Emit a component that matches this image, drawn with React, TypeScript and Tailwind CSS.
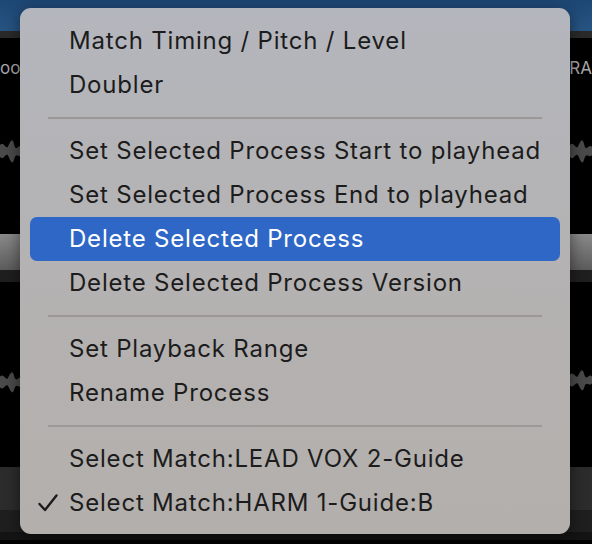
type Item = { label: string; selected?: boolean; checked?: boolean } | "sep";

const items: Item[] = [
  { label: "Match Timing / Pitch / Level" },
  { label: "Doubler" },
  "sep",
  { label: "Set Selected Process Start to playhead" },
  { label: "Set Selected Process End to playhead" },
  { label: "Delete Selected Process", selected: true },
  { label: "Delete Selected Process Version" },
  "sep",
  { label: "Set Playback Range" },
  { label: "Rename Process" },
  "sep",
  { label: "Select Match:LEAD VOX 2-Guide" },
  { label: "Select Match:HARM 1-Guide:B", checked: true },
];

function Wave({ className }: { className?: string }) {
  return (
    <svg viewBox="0 0 40 40" className={className} preserveAspectRatio="none">
      <path
        d="M0 14 C6 10 10 18 14 16 C18 12 22 4 26 14 C30 22 34 12 40 16 L40 24 C34 28 30 20 26 28 C22 36 18 28 14 24 C10 22 6 30 0 26 Z"
        fill="#4a4a4a"
      />
    </svg>
  );
}

function Backdrop() {
  return (
    <div className="flex flex-col h-[544px] w-[592px] bg-black">
      <div className="h-[31px] bg-gradient-to-b from-[#1d4674] to-[#285584]" />
      <div className="h-[7px] bg-[#2a2a2a]" />
      <div className="h-[196px] flex justify-between items-start bg-black">
        <div className="flex flex-col w-[22px]">
          <span className="mt-[19px] text-[17px] leading-[22px] text-[#a8a8a8]">oo</span>
          <Wave className="w-[22px] h-[40px] mt-[52px]" />
        </div>
        <div className="flex flex-col w-[22px] items-end">
          <span className="mt-[19px] text-[17px] leading-[22px] text-[#a8a8a8] whitespace-nowrap">RA</span>
          <Wave className="w-[22px] h-[40px] mt-[52px]" />
        </div>
      </div>
      <div className="h-[36px] bg-gradient-to-b from-[#8a8a8a] to-[#5c5c5c]" />
      <div className="h-[12px] bg-[#1f1f1f]" />
      <div className="h-[185px] flex justify-between bg-black">
        <Wave className="w-[22px] h-[36px] mt-[82px]" />
        <Wave className="w-[22px] h-[36px] mt-[80px]" />
      </div>
      <div className="h-[43px] bg-[#2c2c2c]" />
      <div className="h-[22px] bg-[#1f1f1f]" />
      <div className="h-[8px] bg-[#141414]" />
    </div>
  );
}

export default function App() {
  return (
    <div
      className="relative w-[592px] h-[544px] overflow-hidden"
      style={{ fontFamily: "Inter, 'Noto Sans', sans-serif" }}
    >
      <Backdrop />
      <div className="absolute left-[20px] top-[8px] w-[550px] h-[526px] rounded-[11px] bg-gradient-to-b from-[#b4b6bd] via-[#b4b2b2] to-[#b3afac] shadow-[0_4px_16px_rgba(0,0,0,0.5)] px-[10px] pt-[11px] pb-[9px] flex flex-col">
        {items.map((it, i) =>
          it === "sep" ? (
            <div key={i} className="h-[22px] flex items-center pl-[18px] pr-[18px]">
              <div className="h-[2px] w-full bg-[#9b9896]" />
            </div>
          ) : (
            <div
              key={i}
              className={`h-[44px] flex items-center rounded-[7px] text-[24px] tracking-[0.8px] ${
                it.selected ? "bg-[#2f67c6] text-white" : "text-[#1c1c1c]"
              }`}
            >
              <span className="w-[39px] flex pl-[8px]">
                {it.checked ? (
                  <svg width="20" height="18" viewBox="0 0 20 18" fill="none">
                    <path d="M1.5 10 L7 16 L18.5 1.5" stroke="#1c1c1c" strokeWidth="2.4" strokeLinecap="round" strokeLinejoin="round" />
                  </svg>
                ) : null}
              </span>
              <span className="whitespace-nowrap">{it.label}</span>
            </div>
          )
        )}
      </div>
    </div>
  );
}
